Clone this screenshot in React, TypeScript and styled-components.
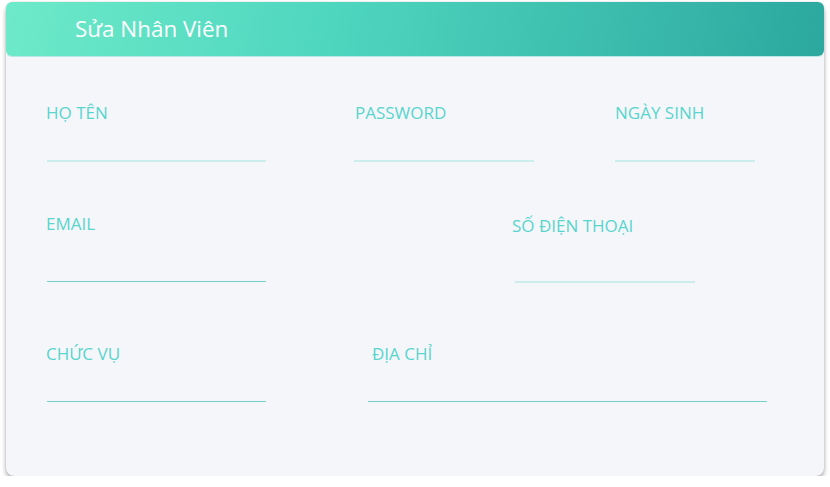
import React from "react";
import styled, { createGlobalStyle } from "styled-components";

const Global = createGlobalStyle`
  html, body { margin: 0; padding: 0; background: #ffffff; }
  body { font-family: "Open Sans", "Noto Sans", sans-serif; }
  * { box-sizing: border-box; }
`;

const Page = styled.div`
  padding: 2px 6px 0 6px;
  width: 830px;
`;

const Card = styled.div`
  width: 818px;
  height: 474px;
  background: #f5f6fa;
  border-radius: 8px;
  box-shadow: 0 3px 5px rgba(0, 0, 0, 0.32), 0 0 2px rgba(0, 0, 0, 0.14);
  display: flex;
  flex-direction: column;
`;

const Header = styled.div`
  height: 54px;
  border-radius: 6px;
  background: linear-gradient(100deg, #6deac9 0%, #4fd6bf 40%, #2ca89f 100%);
  box-shadow: 0 1px 0 rgba(120, 210, 200, 0.45);
  display: flex;
  align-items: center;
  padding-left: 69px;
  padding-bottom: 2px;
`;

const Title = styled.h2`
  margin: 0;
  font-family: "Open Sans", sans-serif;
  font-weight: 400;
  font-size: 22.4px;
  color: #ffffff;
`;

const Body = styled.div`
  padding: 45px 0 0 41px;
  display: flex;
  flex-direction: column;
`;

const Row = styled.div<{ $mt?: number }>`
  display: flex;
  align-items: flex-start;
  margin-top: ${(p) => p.$mt ?? 0}px;
`;

const Field = styled.div<{ $ml?: number; $w: number; $mt?: number }>`
  display: flex;
  flex-direction: column;
  width: ${(p) => p.$w}px;
  margin-left: ${(p) => p.$ml ?? 0}px;
  margin-top: ${(p) => p.$mt ?? 0}px;
`;

const Label = styled.label<{ $shift?: number }>`
  display: block;
  height: 24px;
  line-height: 24px;
  font-size: 17px;
  color: #58d5cd;
  text-transform: uppercase;
  white-space: nowrap;
  margin-left: ${(p) => p.$shift ?? 0}px;
`;

const Input = styled.input<{ $gap: number; $line: "soft" | "firm" }>`
  appearance: none;
  display: block;
  width: 100%;
  margin: ${(p) => p.$gap}px 0 0 0;
  padding: 0;
  height: 0;
  border: none;
  border-bottom: ${(p) => (p.$line === "soft" ? "2px solid #cbeeec" : "1px solid #74d0ca")};
  border-radius: 0;
  outline: none;
  background: transparent;
`;

export default function App() {
  return (
    <>
      <Global />
      <Page>
        <Card>
          <Header>
            <Title>Sửa Nhân Viên</Title>
          </Header>
          <Body>
            <Row>
              <Field $w={219}>
                <Label $shift={-1}>Họ tên</Label>
                <Input $gap={35} $line="soft" />
              </Field>
              <Field $ml={88} $w={180}>
                <Label $shift={1}>Password</Label>
                <Input $gap={35} $line="soft" />
              </Field>
              <Field $ml={81} $w={140}>
                <Label>Ngày sinh</Label>
                <Input $gap={35} $line="soft" />
              </Field>
            </Row>
            <Row $mt={50}>
              <Field $w={219}>
                <Label $shift={-1}>Email</Label>
                <Input $gap={45} $line="firm" />
              </Field>
              <Field $ml={249} $w={180} $mt={2}>
                <Label $shift={-3}>Số điện thoại</Label>
                <Input $gap={43} $line="soft" />
              </Field>
            </Row>
            <Row $mt={59}>
              <Field $w={219}>
                <Label $shift={-1}>Chức vụ</Label>
                <Input $gap={35} $line="firm" />
              </Field>
              <Field $ml={102} $w={399}>
                <Label $shift={4}>Địa chỉ</Label>
                <Input $gap={35} $line="firm" />
              </Field>
            </Row>
          </Body>
        </Card>
      </Page>
    </>
  );
}
